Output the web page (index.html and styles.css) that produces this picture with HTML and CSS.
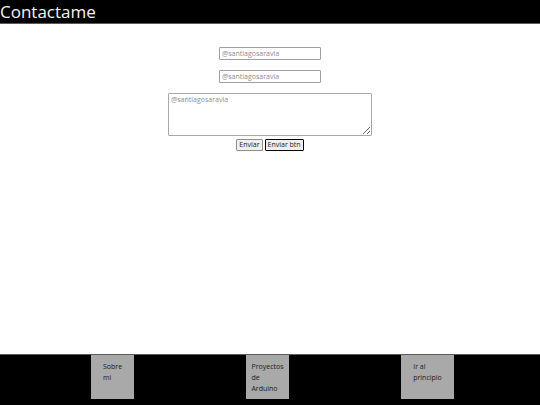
FILE: index.html
```html
<!DOCTYPE html>
<html lang="es">
<head>
<meta charset="utf-8">
<title>Contactame</title>
<link rel="stylesheet" href="styles.css">
</head>
<body>
<header class="top">
  <h1 class="title">Contactame</h1>
</header>
<main class="content">
  <form class="contact">
    <input class="field" type="text" placeholder="@santiagosaravia">
    <input class="field field-second" type="text" placeholder="@santiagosaravia">
    <textarea class="message" placeholder="@santiagosaravia"></textarea>
    <div class="actions">
      <button class="btn" type="button">Enviar</button>
      <button class="btn btn-dark" type="button">Enviar btn</button>
    </div>
  </form>
</main>
<footer class="bottom">
  <ul class="nav">
    <li class="nav-item"><span class="nav-text">Sobre mi</span></li>
    <li class="nav-item"><span class="nav-text">Proyectos de Arduino</span></li>
    <li class="nav-item nav-item-wide"><span class="nav-text">Ir al principio</span></li>
  </ul>
</footer>
</body>
</html>
```

FILE: styles.css
```css
* {
  box-sizing: border-box;
}

html, body {
  margin: 0;
  padding: 0;
  height: 100%;
}

body {
  font-family: "Open Sans", "Noto Sans", sans-serif;
  background: #ffffff;
  display: flex;
  flex-direction: column;
  min-height: 100vh;
}

.top {
  background: #000000;
  height: 24px;
  border-bottom: 1px solid #5a5a5a;
}

.title {
  margin: 0;
  color: #f4f4f4;
  font-weight: normal;
  font-size: 17px;
  line-height: 23px;
}

.content {
  flex: 1;
  display: flex;
  justify-content: center;
  padding-top: 23px;
}

.contact {
  display: flex;
  flex-direction: column;
  align-items: center;
}

.field {
  width: 102px;
  height: 13px;
  border: 1px solid #a0a0a0;
  border-radius: 1px;
  padding: 0 2px;
  font-family: inherit;
  font-size: 7px;
  margin: 0;
}

.field-second {
  margin-top: 10px;
}

.field::placeholder,
.message::placeholder {
  color: #8c8c8c;
}

.message {
  margin-top: 10px;
  width: 204px;
  height: 43px;
  border: 1px solid #a8a8a8;
  border-radius: 1px;
  padding: 1px 2px;
  font-family: inherit;
  font-size: 7px;
}

.actions {
  margin-top: 3px;
  display: flex;
  gap: 2px;
}

.btn {
  font-family: inherit;
  font-size: 7px;
  height: 12px;
  line-height: 10px;
  padding: 0 2px;
  background: #efefef;
  border: 1px solid #8f8f8f;
  border-radius: 1px;
  color: #1a1a1a;
}

.btn-dark {
  border-color: #000000;
}

.bottom {
  background: #000000;
  height: 51px;
  border-top: 1px solid #5a5a5a;
}

.nav {
  list-style: none;
  margin: 0;
  padding: 0 0 0 91px;
  display: flex;
  gap: 112px;
}

.nav-item {
  width: 43px;
  height: 44px;
  background: #a9a9a9;
  display: flex;
  justify-content: center;
  align-items: flex-start;
  padding-top: 6px;
}

.nav-item-wide {
  width: 53px;
}

.nav-text {
  width: min-content;
  font-size: 7px;
  line-height: 11px;
  color: #1a1a1a;
}
```
